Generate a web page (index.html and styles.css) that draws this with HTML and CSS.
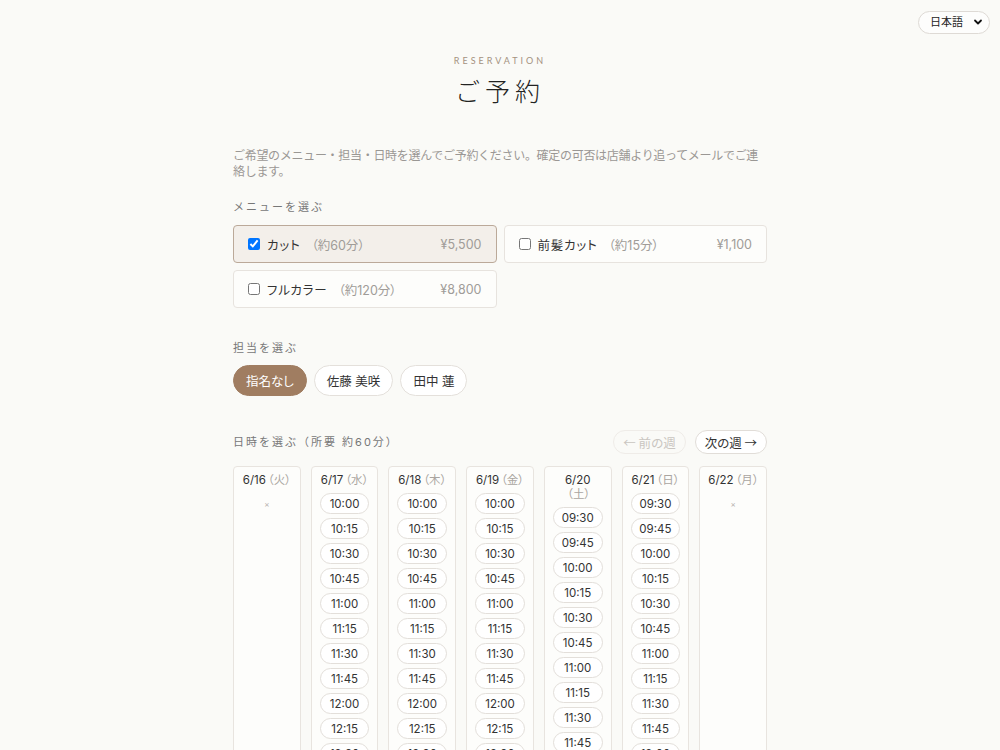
FILE: index.html
```html
<!DOCTYPE html>
<html lang="ja">
<head>
  <meta charset="UTF-8" />
  <meta name="viewport" content="width=device-width, initial-scale=1.0"/>
  <title>ご予約</title>
  <link rel="stylesheet" href="styles.css">
</head>
<body>

  <div class="lang">
    <select class="lang-select">
      <option>日本語</option>
      <option>English</option>
    </select>
    <svg class="lang-caret" width="10" height="10" viewBox="0 0 10 10"><path d="M2 3.5 L5 6.5 L8 3.5" fill="none" stroke="#111" stroke-width="1.8" stroke-linecap="round" stroke-linejoin="round"/></svg>
  </div>

  <main class="page">
    <p class="eyebrow">RESERVATION</p>
    <h1>ご予約</h1>

    <p class="lead">ご希望のメニュー・担当・日時を選んでご予約ください。確定の可否は店舗より追ってメールでご連絡します。</p>

    <!-- menu -->
    <h2 class="section-label">メニューを選ぶ</h2>
    <div class="menu-grid">
      <label class="menu-card checked">
        <input type="checkbox" checked>
        <span class="menu-name">カット</span>
        <span class="menu-time">（約60分）</span>
        <span class="menu-price">¥5,500</span>
      </label>
      <label class="menu-card">
        <input type="checkbox">
        <span class="menu-name">前髪カット</span>
        <span class="menu-time">（約15分）</span>
        <span class="menu-price">¥1,100</span>
      </label>
      <label class="menu-card">
        <input type="checkbox">
        <span class="menu-name">フルカラー</span>
        <span class="menu-time">（約120分）</span>
        <span class="menu-price">¥8,800</span>
      </label>
    </div>

    <!-- staff -->
    <h2 class="section-label staff-label">担当を選ぶ</h2>
    <div class="staff">
      <button class="staff-btn active">指名なし</button>
      <button class="staff-btn">佐藤 美咲</button>
      <button class="staff-btn">田中 蓮</button>
    </div>

    <!-- date -->
    <div class="date-head">
      <h2 class="section-label">日時を選ぶ（所要 約60分）</h2>
      <div class="week-nav">
        <button class="week-btn" disabled>← 前の週</button>
        <button class="week-btn">次の週 →</button>
      </div>
    </div>

    <div class="days" id="days"></div>
  </main>

  <script>
    const days = [
      { d: '6/16', w: '火', slots: [] },
      { d: '6/17', w: '水', from: '10:00', n: 11 },
      { d: '6/18', w: '木', from: '10:00', n: 11 },
      { d: '6/19', w: '金', from: '10:00', n: 11 },
      { d: '6/20', w: '土', from: '09:30', n: 10, wrap: true },
      { d: '6/21', w: '日', from: '09:30', n: 11 },
      { d: '6/22', w: '月', slots: [] }
    ];

    function makeSlots(from, n) {
      let [h, m] = from.split(':').map(Number);
      const out = [];
      for (let i = 0; i < n; i++) {
        out.push(String(h).padStart(2, '0') + ':' + String(m).padStart(2, '0'));
        m += 15;
        if (m === 60) { m = 0; h++; }
      }
      return out;
    }

    const wrap = document.getElementById('days');
    days.forEach(day => {
      const col = document.createElement('div');
      col.className = 'day';
      const slots = day.slots || makeSlots(day.from, day.n);
      let html = `<div class="day-title">${day.d}${day.wrap ? '<br>' : ''}<span class="wd">（${day.w}）</span></div>`;
      if (slots.length === 0) {
        html += '<div class="closed">×</div>';
      } else {
        html += slots.map(t => `<button class="slot">${t}</button>`).join('');
      }
      col.innerHTML = html;
      wrap.appendChild(col);
    });
  </script>
</body>
</html>
```

FILE: styles.css
```css
* { box-sizing: border-box; margin: 0; padding: 0; }
body {
  font-family: 'Inter', 'Noto Sans CJK JP', sans-serif;
  background: #fafaf7;
  color: #333;
  min-height: 100vh;
}
button, select { font-family: inherit; }

.lang { position: absolute; top: 10px; right: 10px; }
.lang-select {
  appearance: none; -webkit-appearance: none;
  width: 72px; height: 23px; padding: 0 0 0 11px;
  border: 1px solid #dedad5; border-radius: 12px;
  background: #fdfdfc; color: #222; font-size: 11px;
}
.lang-caret { position: absolute; right: 7px; top: 7px; pointer-events: none; }

.page { width: 534px; margin: 0 auto; padding-top: 54px; }

.eyebrow {
  text-align: center; font-size: 9px; line-height: 13px;
  letter-spacing: 3px; color: #a4917f; font-family: 'Lato', 'Inter', sans-serif;
}
h1 {
  margin-top: 8px; text-align: center;
  font-size: 25px; line-height: 34px; font-weight: 300;
  letter-spacing: 5px; color: #222;
}
.lead {
  margin-top: 39px; font-size: 12px; line-height: 16px;
  letter-spacing: -0.3px; color: #9a9794;
}

.section-label {
  margin-top: 20px; font-size: 11px; line-height: 14px; font-weight: 400;
  letter-spacing: 2px; color: #777;
}

.menu-grid {
  margin-top: 11px;
  display: grid; grid-template-columns: 1fr 1fr; gap: 7px;
}
.menu-card {
  display: flex; align-items: center; gap: 5px;
  height: 38px; padding: 0 14px;
  border: 1px solid #e7e3de; border-radius: 4px; background: #fdfdfb;
  font-size: 12.5px; cursor: pointer;
  font-feature-settings: "palt";
}
.menu-card.checked { background: #f3efea; border-color: #bba999; }
.menu-card input { margin: 0 2px 0 0; width: 12px; height: 12px; }
.menu-name { color: #333; letter-spacing: 0.8px; }
.menu-time { margin-left: 6px; color: #a09c98; }
.menu-price { margin-left: auto; color: #a09c98; }

.staff-label { margin-top: 33px; }
.staff { margin-top: 10px; display: flex; gap: 7px; }
.staff-btn {
  height: 31px; padding: 0 12px;
  border: 1px solid #e4e0db; border-radius: 999px; background: #fff;
  font-size: 12.5px; color: #333; cursor: pointer;
  font-feature-settings: "palt";
}
.staff-btn.active { background: #a07d61; border-color: #a07d61; color: #fff; }

.date-head {
  margin-top: 34px;
  display: flex; align-items: center; justify-content: space-between;
}
.date-head .section-label { margin-top: 0; }
.week-nav { display: flex; gap: 9px; }
.week-btn {
  height: 24px; padding: 0 9px;
  border: 1px solid #e1ddd8; border-radius: 999px; background: #fff;
  font-family: 'Noto Sans CJK JP', sans-serif;
  font-size: 12.5px; color: #333; cursor: pointer;
  font-feature-settings: "palt";
}
.week-btn:disabled { background: transparent; border-color: #efece8; color: #c9c5c0; cursor: default; }

.days {
  margin-top: 12px;
  display: grid; grid-template-columns: repeat(7, minmax(0, 1fr)); gap: 10px;
  align-items: start;
}
.day {
  display: flex; flex-direction: column; gap: 4px;
  min-height: 320px; padding: 6px 8px 8px;
  border: 1px solid #e8e4df; border-radius: 4px; background: #fdfdfb;
}
.day-title {
  margin-bottom: 2px; text-align: center;
  font-size: 11.5px; line-height: 14px; color: #333; white-space: nowrap;
  font-feature-settings: "palt";
}
.day-title .wd { margin-left: 2px; color: #aaa5a0; }
.closed { margin-top: 6px; text-align: center; font-size: 8px; color: #b5b0ab; }
.slot {
  height: 21px; width: 100%;
  border: 1px solid #e3dfda; border-radius: 999px; background: #fff;
  font-size: 11.5px; color: #333; cursor: pointer;
}
```
